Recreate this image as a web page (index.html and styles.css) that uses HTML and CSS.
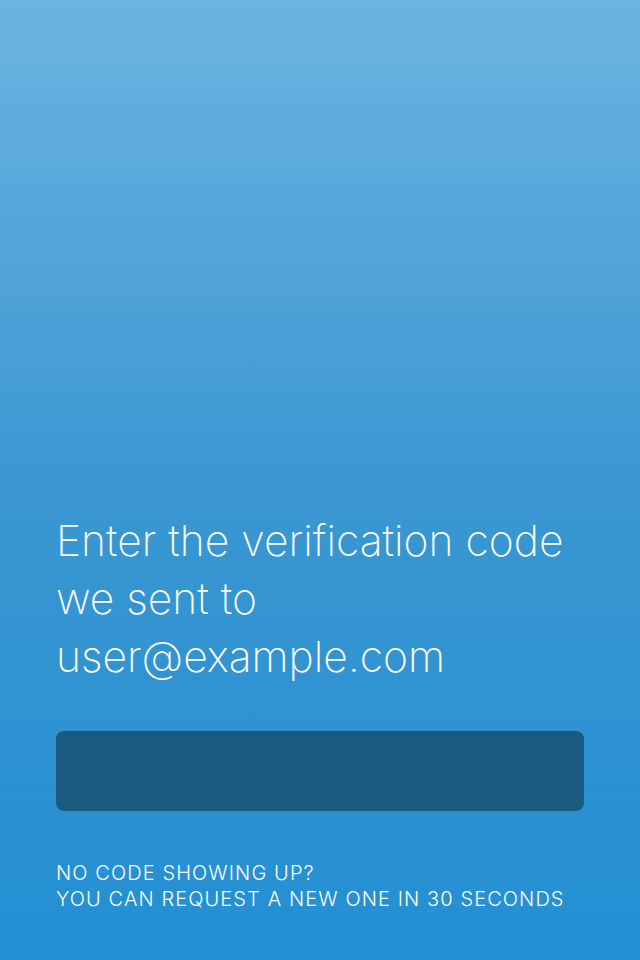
FILE: index.html
```html
<!DOCTYPE html>
<html lang="en">
<head>
<meta charset="utf-8">
<title>Verification</title>
<link rel="stylesheet" href="styles.css">
</head>
<body>
<main class="screen">
  <h1 class="title">Enter the verification code we sent to user@example.com</h1>
  <div class="code-field"></div>
  <p class="hint">NO CODE SHOWING UP?<br>YOU CAN REQUEST A NEW ONE IN 30 SECONDS</p>
</main>
</body>
</html>
```
FILE: styles.css
```css
html, body {
  margin: 0;
  padding: 0;
  height: 100%;
}
body {
  font-family: Inter, Roboto, "Liberation Sans", sans-serif;
  color: #ffffff;
}
.screen {
  box-sizing: border-box;
  height: 960px;
  display: flex;
  flex-direction: column;
  justify-content: flex-end;
  padding: 0 56px 48px;
  background: linear-gradient(180deg, #6bb4e1 0%, #3b97d1 50%, #228fd3 100%);
}
.title {
  margin: 0;
  font-weight: 200;
  font-size: 42.6px;
  line-height: 58px;
  width: 528px;
}
.code-field {
  margin-top: 45px;
  height: 80px;
  border-radius: 8px;
  background: #1b5a7f;
}
.hint {
  margin: 49px 0 0;
  font-weight: 300;
  font-size: 20px;
  line-height: 26px;
  letter-spacing: 1.1px;
}
```
